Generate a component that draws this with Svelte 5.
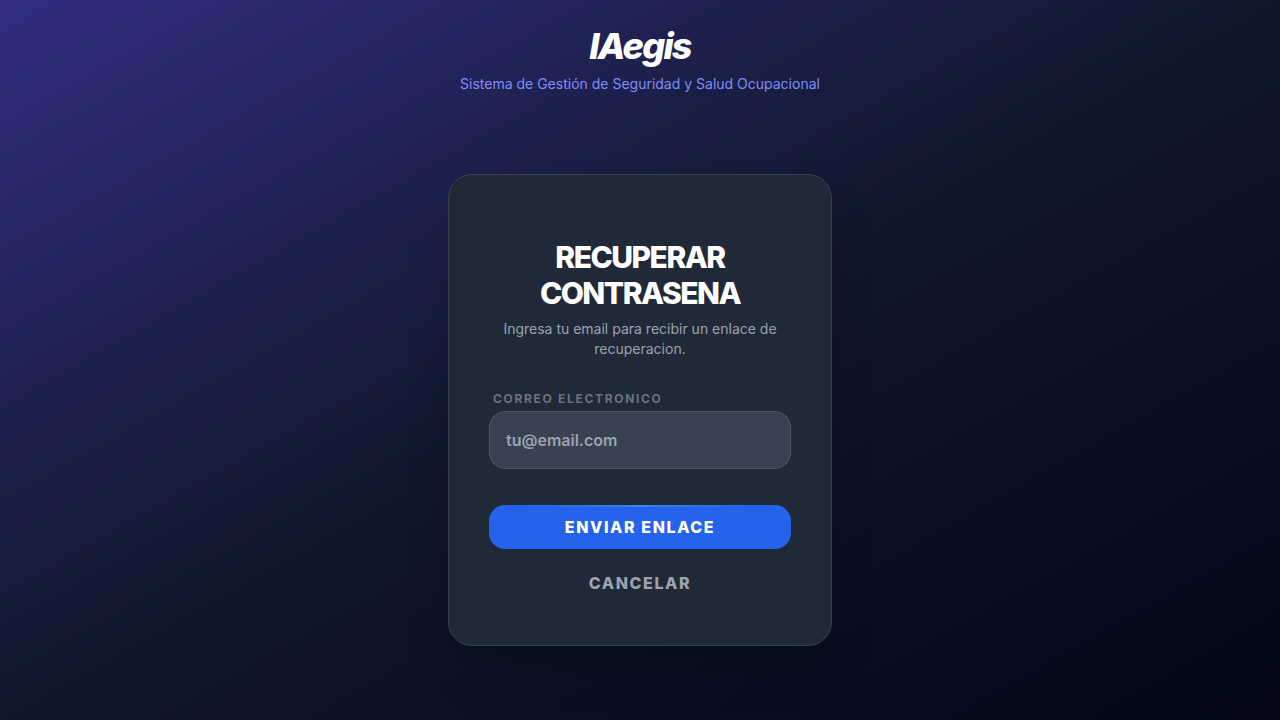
<script>
	let email = "";
</script>

<style>
	:global(body) {
		margin: 0;
		background: #020617;
	}

	.page {
		box-sizing: border-box;
		min-height: 100vh;
		display: flex;
		flex-direction: column;
		align-items: center;
		padding: 24px 16px;
		background: linear-gradient(to bottom right, #312e81, #0f172a, #020617);
		color: #fff;
		font-family: Inter, "Liberation Sans", sans-serif;
	}

	header {
		text-align: center;
	}

	.brand {
		margin: 0;
		font-size: 36px;
		line-height: 44px;
		font-weight: 800;
		font-style: italic;
		letter-spacing: -0.05em;
	}

	.tagline {
		margin: 6px 0 0;
		font-size: 14px;
		line-height: 20px;
		font-weight: 400;
		color: #818cf8;
	}

	main {
		box-sizing: border-box;
		flex: 1;
		display: flex;
		align-items: center;
		justify-content: center;
		width: 100%;
		padding-top: 30px;
	}

	.card {
		box-sizing: border-box;
		width: 100%;
		max-width: 384px;
		padding: 64px 40px 40px;
		border: 1px solid #374151;
		border-radius: 24px;
		background: #1f2937;
		box-shadow: 0 25px 50px -12px rgba(0, 0, 0, 0.25);
		text-align: center;
	}

	h2 {
		margin: 0;
		font-size: 30px;
		line-height: 36px;
		font-weight: 800;
		letter-spacing: -0.05em;
		text-transform: uppercase;
	}

	.hint {
		margin: 8px 0 32px;
		font-size: 14px;
		line-height: 20px;
		font-weight: 400;
		color: #9ca3af;
	}

	label {
		display: block;
		margin: 0 4px 4px;
		font-size: 12px;
		line-height: 16px;
		font-weight: 700;
		letter-spacing: 0.14em;
		text-align: left;
		text-transform: uppercase;
		color: #6b7280;
	}

	input {
		box-sizing: border-box;
		display: block;
		width: 100%;
		padding: 16px;
		border: 1px solid #4b5563;
		border-radius: 16px;
		background: #374151;
		color: #fff;
		font: 600 16px/24px Inter, "Liberation Sans", sans-serif;
	}

	input::placeholder {
		color: #9ca3af;
		opacity: 1;
	}

	button {
		display: block;
		width: 100%;
		height: 44px;
		border: 0;
		border-radius: 16px;
		background: transparent;
		color: #9ca3af;
		font: 800 16px/24px Inter, "Liberation Sans", sans-serif;
		letter-spacing: 0.1em;
		text-transform: uppercase;
		cursor: pointer;
	}

	.submit {
		margin: 36px 0 12px;
		background: linear-gradient(to right, transparent 15%, #3b82f6, transparent 85%) top / 100% 2px no-repeat #2563eb;
		color: #fff;
	}
</style>

<div class="page">
	<header>
		<h1 class="brand">IAegis</h1>
		<p class="tagline">Sistema de Gestión de Seguridad y Salud Ocupacional</p>
	</header>

	<main>
		<form class="card" on:submit|preventDefault>
			<h2>Recuperar Contrasena</h2>
			<p class="hint">Ingresa tu email para recibir un enlace de recuperacion.</p>

			<label for="email">Correo electronico</label>
			<input id="email" type="email" placeholder="tu@email.com" bind:value={email} />

			<button class="submit" type="submit">Enviar enlace</button>
			<button type="button">Cancelar</button>
		</form>
	</main>
</div>
